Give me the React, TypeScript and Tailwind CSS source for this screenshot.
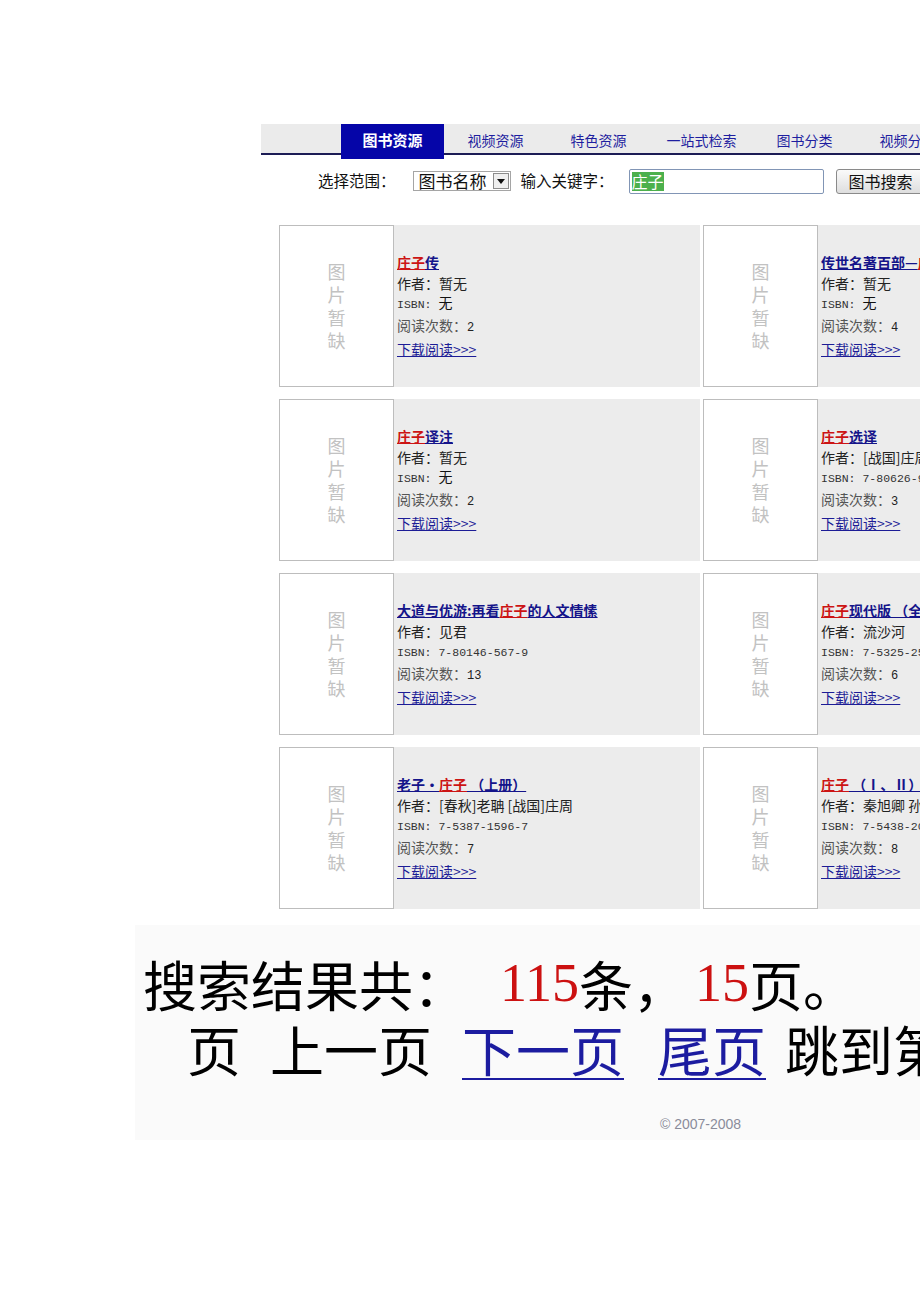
import React from 'react';

type Seg = { t: string; hi?: boolean };
type Book = { title: Seg[]; author: string; isbn: string; reads: string };

const tabs = ['图书资源', '视频资源', '特色资源', '一站式检索', '图书分类', '视频分类'];

const books: Book[] = [
  { title: [{ t: '庄子', hi: true }, { t: '传' }], author: '暂无', isbn: '无', reads: '2' },
  { title: [{ t: '传世名著百部—' }, { t: '庄子', hi: true }], author: '暂无', isbn: '无', reads: '4' },
  { title: [{ t: '庄子', hi: true }, { t: '译注' }], author: '暂无', isbn: '无', reads: '2' },
  { title: [{ t: '庄子', hi: true }, { t: '选译' }], author: '[战国]庄周', isbn: '7-80626-912-4', reads: '3' },
  {
    title: [{ t: '大道与优游:再看' }, { t: '庄子', hi: true }, { t: '的人文情愫' }],
    author: '见君',
    isbn: '7-80146-567-9',
    reads: '13',
  },
  { title: [{ t: '庄子', hi: true }, { t: '现代版 （全本）' }], author: '流沙河', isbn: '7-5325-2534-6', reads: '6' },
  {
    title: [{ t: '老子·' }, { t: '庄子', hi: true }, { t: ' （上册）' }],
    author: '[春秋]老聃 [战国]庄周',
    isbn: '7-5387-1596-7',
    reads: '7',
  },
  { title: [{ t: '庄子', hi: true }, { t: ' （Ⅰ、Ⅱ）' }], author: '秦旭卿 孙雍长', isbn: '7-5438-2045-3', reads: '8' },
];

const cjk = "font-['Noto_Sans_CJK_SC',sans-serif]";

const BookCard = ({ book }: { book: Book }) => (
  <div className="flex h-[162px] w-[421px] bg-[#ececec]">
    {/* placeholder cover */}
    <div className="flex w-[115px] shrink-0 flex-col items-center justify-center border border-[#bdbdbd] bg-white text-[18px] leading-[23px] text-[#c2c2c2]">
      <span>图</span>
      <span>片</span>
      <span>暂</span>
      <span>缺</span>
    </div>
    <div className="flex flex-col justify-center whitespace-nowrap pl-[3px] text-[14px] leading-[21px]">
      <div className="font-bold">
        {book.title.map((s, i) => (
          <span key={i} className={s.hi ? 'text-[#cc1414] underline' : 'text-[#14148a] underline'}>
            {s.t}
          </span>
        ))}
      </div>
      <div className="text-[#222]">作者：{book.author}</div>
      <div className="font-['Liberation_Mono','Noto_Sans_CJK_SC',monospace] text-[11.5px] text-[#333]">
        ISBN: <span className="text-[14px] text-[#111]">{book.isbn === '无' ? '无' : ''}</span>
        {book.isbn !== '无' && <span>{book.isbn}</span>}
      </div>
      <div className="text-[#555]">
        阅读次数：<span className="font-['Liberation_Mono',monospace] text-[12px] text-[#222]">{book.reads}</span>
      </div>
      <div>
        <span className="text-[#1c1c96] underline">下载阅读&gt;&gt;&gt;</span>
      </div>
    </div>
  </div>
);

export default function App() {
  return (
    <div className={`relative h-[1302px] w-[920px] overflow-hidden bg-white pt-[124px] ${cjk}`}>
      {/* tab bar */}
      <div className="ml-[261px] flex h-[31px] border-b-2 border-[#1c1c55] bg-[#ebebeb] pl-[80px]">
        {tabs.map((t, i) =>
          i === 0 ? (
            <div
              key={t}
              className="flex h-[35px] w-[103px] shrink-0 justify-center bg-[#0505a8] pt-[6px] text-[15px] font-bold leading-[20px] text-white"
            >
              {t}
            </div>
          ) : (
            <div
              key={t}
              className="flex h-[29px] w-[103px] shrink-0 justify-center pt-[6px] text-[14px] leading-[20px] text-[#1e1ea0]"
            >
              {t}
            </div>
          ),
        )}
      </div>

      {/* search row */}
      <div className="ml-[318px] mt-[13px] flex h-[26px] items-center whitespace-nowrap text-[15.5px] text-[#111]">
        <span>选择范围：</span>
        <div className="ml-[17px] flex h-[20px] w-[98px] shrink-0 items-center justify-between border border-[#a5a5a5] bg-white">
          <span className="pl-[5px] text-[17px] leading-[20px]">图书名称</span>
          <span className="mr-[1px] flex h-[16px] w-[16px] items-center justify-center border border-[#8c8c8c] bg-[#efefef]">
            <svg width="8" height="5" viewBox="0 0 8 5">
              <polygon points="0,0 8,0 4,5" fill="#111" />
            </svg>
          </span>
        </div>
        <span className="ml-[10px]">输入关键字：</span>
        <div className="ml-[15px] flex h-[25px] w-[195px] shrink-0 items-center rounded-[2px] border border-[#8195b5] bg-white px-[2px]">
          <span className="bg-[#4cb04c] text-[16px] leading-[19px] text-white">庄子</span>
        </div>
        <div className="ml-[12px] flex h-[25px] w-[92px] shrink-0 items-center rounded-[3px] border border-[#8a8a8a] bg-gradient-to-b from-[#fafafa] to-[#dedede] pl-[12px] text-[16px]">
          图书搜索
        </div>
      </div>

      {/* results */}
      <div className="ml-[279px] mt-[31px] grid w-[845px] grid-cols-[421px_421px] gap-x-[3px] gap-y-[12px]">
        {books.map((b, i) => (
          <BookCard key={i} book={b} />
        ))}
      </div>

      {/* pager */}
      <div className="ml-[135px] mt-[16px] whitespace-nowrap bg-[#fafafa] pb-[6px] pt-[26px]">
        <div className="flex pl-[8px] text-[54px] leading-[65px] text-black">
          <span>搜索结果共：</span>
          <span className="ml-[33px] font-['Liberation_Serif',serif] text-[#cc1111]">115</span>
          <span>条，</span>
          <span className="ml-[8px] font-['Liberation_Serif',serif] text-[#cc1111]">15</span>
          <span>页。</span>
        </div>
        <div className="flex pl-[52px] text-[54px] leading-[65px] text-black">
          <span>页</span>
          <span className="ml-[29px]">上一页</span>
          <span className="ml-[30px] text-[#1c1ca0] underline decoration-[2px] underline-offset-[6px]">下一页</span>
          <span className="ml-[34px] text-[#1c1ca0] underline decoration-[2px] underline-offset-[6px]">尾页</span>
          <span className="ml-[19px]">跳到第</span>
        </div>
        <div className="ml-[525px] mt-[33px] font-['Liberation_Sans',sans-serif] text-[14px] leading-[20px] text-[#8a8c9a]">
          © 2007-2008
        </div>
      </div>
    </div>
  );
}
